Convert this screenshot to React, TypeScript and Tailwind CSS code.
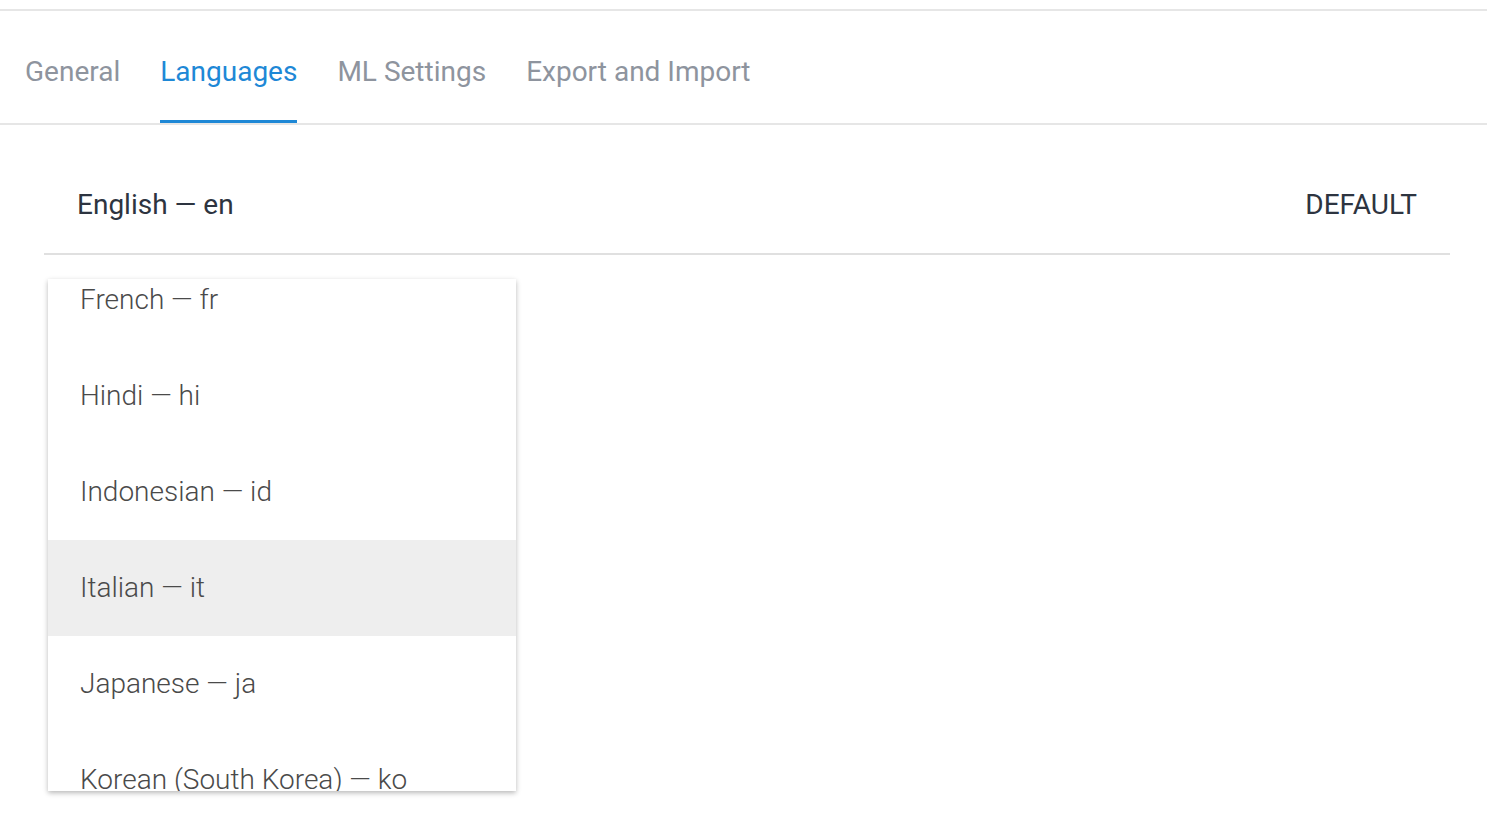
const tabs = ["General", "Languages", "ML Settings", "Export and Import"];

const options = [
  "French — fr",
  "Hindi — hi",
  "Indonesian — id",
  "Italian — it",
  "Japanese — ja",
  "Korean (South Korea) — ko",
];

export default function App() {
  return (
    <div className="min-h-[829px] w-full bg-white font-['Roboto',sans-serif]">
      <div className="h-[9px]" />
      <div className="border-t-2 border-b-2 border-[#e6e6e6]">
        <div className="flex h-[112px] gap-[40px] pl-[25px]">
          {tabs.map((t) => {
            const active = t === "Languages";
            return (
              <div
                key={t}
                className={
                  active
                    ? "flex items-center border-b-[3px] border-[#1e88d6] pt-[13px] text-[28px] text-[#1e88d6]"
                    : "flex items-center border-b-[3px] border-transparent pt-[13px] text-[28px] text-[#8e949e]"
                }
              >
                {t}
              </div>
            );
          })}
        </div>
      </div>

      <div className="pl-[44px] pr-[37px] pt-[40px]">
        <div className="flex h-[90px] items-center justify-between border-b-2 border-[#e0e0e0] pb-[8px] pl-[33px] pr-[33px] text-[28px] text-[#2d3440]">
          <span>English — en</span>
          <span>DEFAULT</span>
        </div>

        <div className="ml-[4px] mt-[24px] h-[512px] w-[468px] overflow-hidden bg-white shadow-[0_2px_5px_rgba(0,0,0,0.28)]">
          <div className="-mt-[27px]">
            {options.map((o) => (
              <div
                key={o}
                className={
                  o === "Italian — it"
                    ? "flex h-[96px] items-center bg-[#eeeeee] pl-[32px] text-[28px] font-light text-[#4a4a4a]"
                    : "flex h-[96px] items-center pl-[32px] text-[28px] font-light text-[#4a4a4a]"
                }
              >
                {o}
              </div>
            ))}
          </div>
        </div>
      </div>
    </div>
  );
}
